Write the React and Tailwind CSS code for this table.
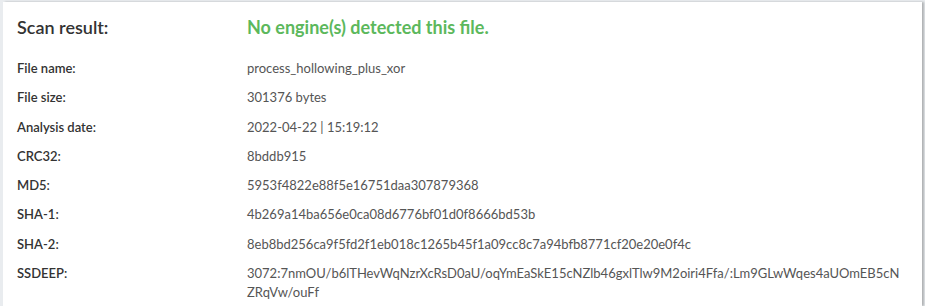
const ROWS = [
  ["File name:", "process_hollowing_plus_xor"],
  ["File size:", "301376 bytes"],
  ["Analysis date:", "2022-04-22 | 15:19:12"],
  ["CRC32:", "8bddb915"],
  ["MD5:", "5953f4822e88f5e16751daa307879368"],
  ["SHA-1:", "4b269a14ba656e0ca08d6776bf01d0f8666bd53b"],
  ["SHA-2:", "8eb8bd256ca9f5fd2f1eb018c1265b45f1a09cc8c7a94bfb8771cf20e20e0f4c"],
  [
    "SSDEEP:",
    "3072:7nmOU/b6lTHevWqNzrXcRsD0aU/oqYmEaSkE15cNZlb46gxlTlw9M2oiri4Ffa/:Lm9GLwWqes4aUOmEB5cNZRqVw/ouFf",
  ],
];

export default function App() {
  return (
    <div
      className="w-[925px] h-[306px] overflow-hidden bg-[#e9ecef] pl-[3px] pt-[2px] pr-[3px]"
      style={{ fontFamily: "Lato, 'Open Sans', sans-serif" }}
    >
      <div className="h-full bg-white shadow-[2px_0_2px_rgba(0,0,0,0.25)] pl-[14px] pr-[20px] pt-[13px]">
        <div className="flex items-center h-[24px]">
          <div className="w-[230px] shrink-0 text-[18px] font-semibold text-[#333]">
            Scan result:
          </div>
          <div className="text-[18px] font-bold text-[#5cb85c]">
            No engine(s) detected this file.
          </div>
        </div>

        <div className="mt-[20px] flex flex-col gap-[9.75px]">
          {ROWS.map(([label, value]) => (
            <div key={label} className="flex text-[13px] leading-[19.5px]">
              <div className="w-[230px] shrink-0 font-semibold text-[#333]">
                {label}
              </div>
              <div className="flex-1 min-w-0 text-[#555] break-all">{value}</div>
            </div>
          ))}
        </div>
      </div>
    </div>
  );
}
